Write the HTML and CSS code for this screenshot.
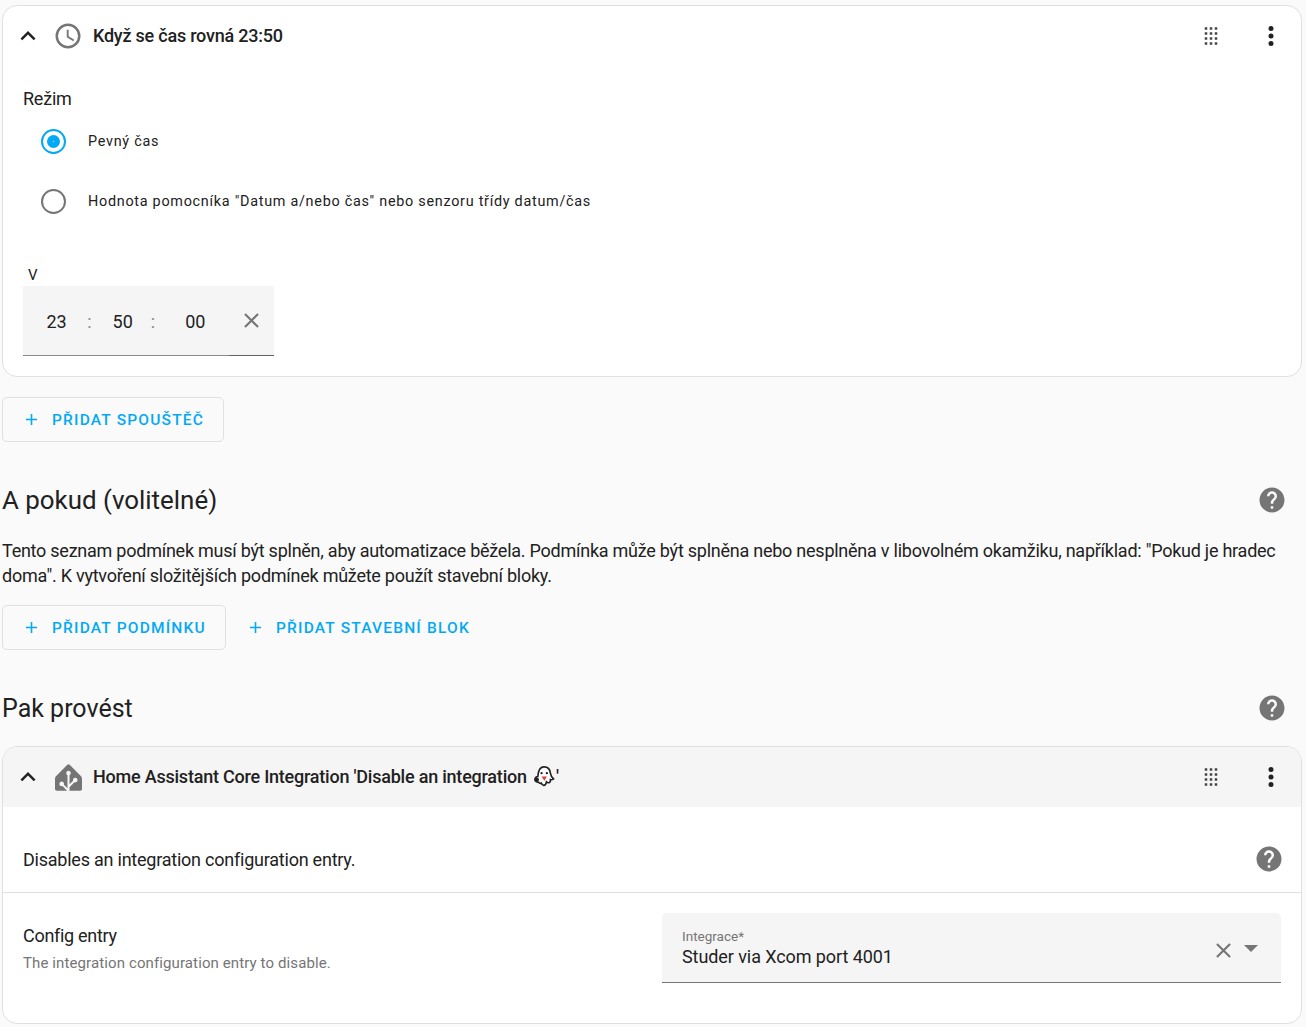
FILE: index.html
```html
<!DOCTYPE html>
<html lang="cs">
<head>
<meta charset="utf-8">
<title>Automatizace</title>
<link rel="stylesheet" href="styles.css">
</head>
<body>
<main class="page">
  <section class="card trigger-card">
    <header class="panel-head">
      <svg class="icon chevron" viewBox="0 0 24 24"><path d="M7.41,15.41L12,10.83L16.59,15.41L18,14L12,8L6,14L7.41,15.41Z"/></svg>
      <svg class="icon lead" viewBox="0 0 24 24"><path d="M12,20A8,8 0 0,0 20,12A8,8 0 0,0 12,4A8,8 0 0,0 4,12A8,8 0 0,0 12,20M12,2A10,10 0 0,1 22,12A10,10 0 0,1 12,22C6.47,22 2,17.5 2,12A10,10 0 0,1 12,2M12.5,7V12.25L17,14.92L16.25,16.15L11,13V7H12.5Z"/></svg>
      <h3 class="panel-title">Když se čas rovná 23:50</h3>
      <svg class="icon drag" viewBox="0 0 24 24"><path d="M7,19V17H9V19H7M11,19V17H13V19H11M15,19V17H17V19H15M7,15V13H9V15H7M11,15V13H13V15H11M15,15V13H17V15H15M7,11V9H9V11H7M11,11V9H13V11H11M15,11V9H17V11H15M7,7V5H9V7H7M11,7V5H13V7H11M15,7V5H17V7H15Z"/></svg>
      <svg class="icon dots" viewBox="0 0 24 24"><path d="M12,16A2,2 0 0,1 14,18A2,2 0 0,1 12,20A2,2 0 0,1 10,18A2,2 0 0,1 12,16M12,10A2,2 0 0,1 14,12A2,2 0 0,1 12,14A2,2 0 0,1 10,12A2,2 0 0,1 12,10M12,4A2,2 0 0,1 14,6A2,2 0 0,1 12,8A2,2 0 0,1 10,6A2,2 0 0,1 12,4Z"/></svg>
    </header>
    <div class="trigger-body">
      <div class="mode-label">Režim</div>
      <div class="radio-row"><span class="radio checked"></span><span class="radio-text">Pevný čas</span></div>
      <div class="radio-row"><span class="radio"></span><span class="radio-text">Hodnota pomocníka "Datum a/nebo čas" nebo senzoru třídy datum/čas</span></div>
      <div class="time-label">V</div>
      <div class="time-input">
        <span class="t-num t-h">23</span><span class="t-sep">:</span>
        <span class="t-num t-m">50</span><span class="t-sep">:</span>
        <span class="t-num t-s">00</span>
        <svg class="icon clear" viewBox="0 0 24 24"><path d="M19,6.41L17.59,5L12,10.59L6.41,5L5,6.41L10.59,12L5,17.59L6.41,19L12,13.41L17.59,19L19,17.59L13.41,12L19,6.41Z"/></svg>
      </div>
    </div>
  </section>

  <div class="btn-row first-row">
    <button class="btn outlined w-trigger"><svg class="icon plus" viewBox="0 0 24 24"><path d="M19,13H13V19H11V13H5V11H11V5H13V11H19V13Z"/></svg>PŘIDAT SPOUŠTĚČ</button>
  </div>

  <div class="section-head">
    <h2 class="section-title title-large">A pokud (volitelné)</h2>
    <svg class="icon help" viewBox="0 0 24 24"><path d="M15.07,11.25L14.17,12.17C13.45,12.89 13,13.5 13,15H11V14.5C11,13.39 11.45,12.39 12.17,11.67L13.41,10.41C13.78,10.05 14,9.55 14,9C14,7.89 13.1,7 12,7A2,2 0 0,0 10,9H8A4,4 0 0,1 12,5A4,4 0 0,1 16,9C16,9.88 15.64,10.67 15.07,11.25M13,19H11V17H13M12,2A10,10 0 0,0 2,12A10,10 0 0,0 12,22A10,10 0 0,0 22,12C22,6.47 17.5,2 12,2Z"/></svg>
  </div>
  <p class="intro">Tento seznam podmínek musí být splněn, aby automatizace běžela. Podmínka může být splněna nebo nesplněna v libovolném okamžiku, například: "Pokud je hradec doma". K vytvoření složitějších podmínek můžete použít stavební bloky.</p>
  <div class="btn-row">
    <button class="btn outlined w-cond"><svg class="icon plus" viewBox="0 0 24 24"><path d="M19,13H13V19H11V13H5V11H11V5H13V11H19V13Z"/></svg>PŘIDAT PODMÍNKU</button>
    <button class="btn flat"><svg class="icon plus" viewBox="0 0 24 24"><path d="M19,13H13V19H11V13H5V11H11V5H13V11H19V13Z"/></svg>PŘIDAT STAVEBNÍ BLOK</button>
  </div>

  <div class="section-head">
    <h2 class="section-title">Pak provést</h2>
    <svg class="icon help" viewBox="0 0 24 24"><path d="M15.07,11.25L14.17,12.17C13.45,12.89 13,13.5 13,15H11V14.5C11,13.39 11.45,12.39 12.17,11.67L13.41,10.41C13.78,10.05 14,9.55 14,9C14,7.89 13.1,7 12,7A2,2 0 0,0 10,9H8A4,4 0 0,1 12,5A4,4 0 0,1 16,9C16,9.88 15.64,10.67 15.07,11.25M13,19H11V17H13M12,2A10,10 0 0,0 2,12A10,10 0 0,0 12,22A10,10 0 0,0 22,12C22,6.47 17.5,2 12,2Z"/></svg>
  </div>

  <section class="card action-card">
    <header class="panel-head shaded">
      <svg class="icon chevron" viewBox="0 0 24 24"><path d="M7.41,15.41L12,10.83L16.59,15.41L18,14L12,8L6,14L7.41,15.41Z"/></svg>
      <svg class="icon lead" viewBox="0 0 24 24"><path d="M22.939 10.627 13.061.749a1.505 1.505 0 0 0-2.121 0l-9.879 9.878C.478 11.21 0 12.363 0 13.187v9c0 .826.675 1.5 1.5 1.5h9.227l-4.063-4.062a2.034 2.034 0 0 1-.664.113c-1.13 0-2.05-.92-2.05-2.05s.92-2.05 2.05-2.05 2.05.92 2.05 2.05c0 .233-.041.456-.113.665l3.163 3.163V9.928a2.05 2.05 0 0 1-1.15-1.84c0-1.13.92-2.05 2.05-2.05s2.05.92 2.05 2.05a2.05 2.05 0 0 1-1.15 1.84v8.127l3.146-3.146A2.051 2.051 0 0 1 18 12.239c1.13 0 2.05.92 2.05 2.05s-.92 2.05-2.05 2.05a2.02 2.02 0 0 1-.709-.13L12.9 20.602v3.088h9.6c.825 0 1.5-.675 1.5-1.5v-9c0-.825-.477-1.977-1.061-2.561z"/></svg>
      <h3 class="panel-title">Home Assistant Core Integration 'Disable an integration
        <svg class="ghost" viewBox="0 0 24 24"><path class="ghost-body" d="M12 2c4.600-.3 6.800 3 7.200 6.500.3 2.500 1 4 3.300 6-1 .9-2.300 1-3.300.8.300 1.700-.6 3-1.800 3.200-1 .2-1.700-.3-2.300-.9-.3 2-1.300 3.600-2.900 3.700-1.300 0-2.100-1.200-2.500-2.400-1.200.4-2.300.1-2.800-.9-1.700.3-3.600-.9-3.700-2.900-.1-1.800 1.200-3.100 2.900-3.100.3-4.200 1.700-9.700 5.900-10z"/><circle class="ghost-hole" cx="4.800" cy="15.500" r="2.500"/><circle class="ghost-eye" cx="10" cy="8.500" r="1.200"/><circle class="ghost-eye" cx="15.500" cy="8.500" r="1.200"/><path class="ghost-mouth" d="M10 12h5.500l-2.600 4.500z"/></svg>'</h3>
      <svg class="icon drag" viewBox="0 0 24 24"><path d="M7,19V17H9V19H7M11,19V17H13V19H11M15,19V17H17V19H15M7,15V13H9V15H7M11,15V13H13V15H11M15,15V13H17V15H15M7,11V9H9V11H7M11,11V9H13V11H11M15,11V9H17V11H15M7,7V5H9V7H7M11,7V5H13V7H11M15,7V5H17V7H15Z"/></svg>
      <svg class="icon dots" viewBox="0 0 24 24"><path d="M12,16A2,2 0 0,1 14,18A2,2 0 0,1 12,20A2,2 0 0,1 10,18A2,2 0 0,1 12,16M12,10A2,2 0 0,1 14,12A2,2 0 0,1 12,14A2,2 0 0,1 10,12A2,2 0 0,1 12,10M12,4A2,2 0 0,1 14,6A2,2 0 0,1 12,8A2,2 0 0,1 10,6A2,2 0 0,1 12,4Z"/></svg>
    </header>
    <div class="desc-row">
      <span class="desc-text">Disables an integration configuration entry.</span>
      <svg class="icon help" viewBox="0 0 24 24"><path d="M15.07,11.25L14.17,12.17C13.45,12.89 13,13.5 13,15H11V14.5C11,13.39 11.45,12.39 12.17,11.67L13.41,10.41C13.78,10.05 14,9.55 14,9C14,7.89 13.1,7 12,7A2,2 0 0,0 10,9H8A4,4 0 0,1 12,5A4,4 0 0,1 16,9C16,9.88 15.64,10.67 15.07,11.25M13,19H11V17H13M12,2A10,10 0 0,0 2,12A10,10 0 0,0 12,22A10,10 0 0,0 22,12C22,6.47 17.5,2 12,2Z"/></svg>
    </div>
    <div class="field-row">
      <div class="field-info">
        <div class="field-name">Config entry</div>
        <div class="field-help">The integration configuration entry to disable.</div>
      </div>
      <div class="select">
        <div class="select-text">
          <div class="select-label">Integrace*</div>
          <div class="select-value">Studer via Xcom port 4001</div>
        </div>
        <svg class="icon clear" viewBox="0 0 24 24"><path d="M19,6.41L17.59,5L12,10.59L6.41,5L5,6.41L10.59,12L5,17.59L6.41,19L12,13.41L17.59,19L19,17.59L13.41,12L19,6.41Z"/></svg>
        <span class="caret"></span>
      </div>
    </div>
  </section>
</main>
</body>
</html>
```
FILE: styles.css
```css
* { box-sizing: border-box; }
html, body { margin: 0; padding: 0; background: #fafafa; height: 1027px; overflow: hidden; }
body { font-family: Roboto, "Liberation Sans", sans-serif; color: #212121; }
.page { width: 1300px; margin-left: 2px; padding-top: 5px; }
.icon { display: block; flex: none; fill: #757575; }

.card { background: #fff; border: 1px solid #e0e0e0; border-radius: 15px; }
.trigger-card { height: 372px; }
.action-card { height: 278px; overflow: hidden; }

.panel-head { display: flex; align-items: center; height: 60px; padding: 0 15px 0 10px; }
.panel-head.shaded { background: #f5f5f5; }
.chevron { width: 30px; height: 30px; fill: #212121; }
.lead { width: 30px; height: 30px; margin-left: 10px; }
.action-card .lead { width: 27px; height: 27px; margin-left: 12px; margin-right: 1px; }
.panel-title { flex: 1; margin: 0 0 0 10px; font-size: 18px; font-weight: 500; line-height: 26px; letter-spacing: -0.22px; white-space: nowrap; }
.ghost { display: inline-block; width: 23px; height: 23px; vertical-align: -5px; margin: 0 1px 0 1px; }
.ghost-body { fill: #fff; stroke: #212121; stroke-width: 1.7; }
.ghost-hole { fill: #212121; }
.ghost-eye { fill: #212121; }
.ghost-mouth { fill: #e53935; }
.drag { width: 30px; height: 30px; margin-right: 30px; fill: #444; }
.dots { width: 30px; height: 30px; fill: #212121; }

.trigger-body { padding: 0 20px; }
.mode-label { font-size: 18px; line-height: 25px; margin-top: 20px; letter-spacing: -0.22px; }
.radio-row { display: flex; align-items: center; height: 60px; padding-left: 18px; }
.radio { flex: none; position: relative; width: 25px; height: 25px; border: 2.5px solid #757575; border-radius: 50%; }
.radio.checked { border-color: #03a9f4; }
.radio.checked::after { content: ""; position: absolute; inset: 4px; border-radius: 50%; background: radial-gradient(circle, #9ad9f9 0, #03a9f4 1.2px); }
.radio-text { margin-left: 22px; font-size: 14.4px; letter-spacing: 0.72px; white-space: nowrap; }
.time-label { margin: 33px 0 0 5px; font-size: 15px; line-height: 22px; height: 22px; }
.time-input { position: relative; display: flex; align-items: center; width: 251px; height: 70px; padding-top: 2px; background: #f5f5f5; border-bottom: 1px solid #8a8a8a; font-size: 18px; }
.time-input::after { content: ""; position: absolute; right: 0; bottom: -1px; width: 45px; height: 1px; background: #616161; }
.t-sep { color: #8a8a8a; }
.t-h { margin-left: 23.5px; }
.time-input .t-sep { margin-left: 20.5px; }
.t-m { margin-left: 21px; }
.time-input .t-m + .t-sep { margin-left: 18px; }
.t-s { margin-left: 30px; }
.clear { width: 25px; height: 25px; }
.time-input .clear { margin-left: 33.5px; margin-top: -3px; }

.btn-row { display: flex; }
.first-row { margin-top: 20px; }
.btn { display: flex; align-items: center; height: 45px; padding: 0 0 0 19px; border-radius: 5px; background: transparent; font-family: inherit; font-size: 15.5px; font-weight: 500; letter-spacing: 1.2px; color: #03a9f4; white-space: nowrap; border: 1px solid transparent; }
.btn.outlined { border-color: #e0e0e0; }
.plus { width: 19px; height: 19px; margin-right: 11px; fill: #03a9f4; }
.w-trigger { width: 222px; }
.w-cond { width: 224px; }

.section-head { display: flex; align-items: center; justify-content: space-between; height: 40px; margin-top: 38px; padding-right: 15px; }
.section-title { margin: 0; padding-top: 2px; font-size: 25px; font-weight: 400; line-height: 40px; }
.title-large { padding-top: 0; font-size: 25.9px; }
.help { width: 30px; height: 30px; }
.intro { margin: 18px 0 17px; font-size: 18px; line-height: 25px; letter-spacing: -0.245px; }
.section-head + .action-card { margin-top: 18px; }

.desc-row { display: flex; align-items: center; justify-content: space-between; height: 86px; padding: 19px 17px 0 20px; border-bottom: 1px solid #e0e0e0; }
.desc-text { font-size: 18px; letter-spacing: -0.23px; }
.field-row { display: flex; justify-content: space-between; padding: 20px 20px 0; }
.field-info { padding-top: 10px; }
.field-name { font-size: 18px; line-height: 26px; letter-spacing: -0.3px; }
.field-help { margin-top: 3px; font-size: 15px; line-height: 22px; letter-spacing: 0.11px; color: #757575; }
.select { display: flex; align-items: center; width: 619px; height: 70px; padding: 0 20px; background: #f5f5f5; border-bottom: 1px solid #757575; border-radius: 5px 5px 0 0; }
.select-text { flex: 1; }
.select-label { margin: -1px 0 1px; font-size: 13.5px; line-height: 18px; color: #757575; }
.select-value { font-size: 18px; line-height: 22px; letter-spacing: -0.08px; }
.select .clear { margin-right: 8px; margin-top: 5px; }
.caret { width: 0; height: 0; margin: 2px 3px 0 0; border-left: 7px solid transparent; border-right: 7px solid transparent; border-top: 7px solid #757575; }
```
